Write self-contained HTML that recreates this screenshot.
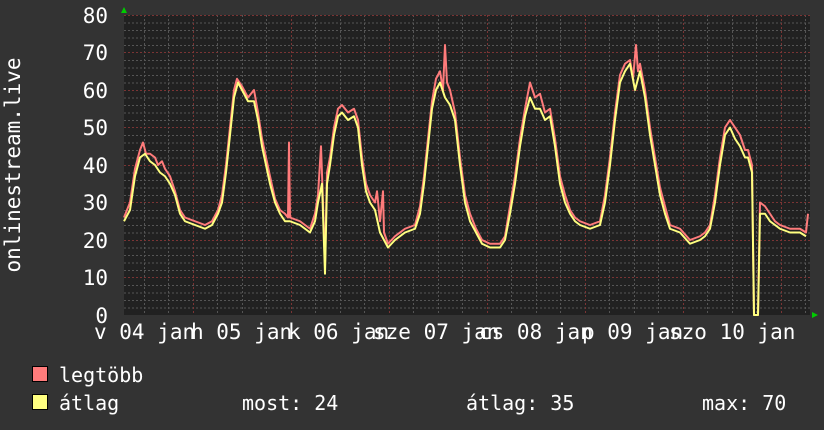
<!DOCTYPE html>
<html><head><meta charset="utf-8"><style>
html,body{margin:0;padding:0;background:#333;}
svg{display:block}
text{font-family:"DejaVu Sans Mono","Liberation Mono",monospace;fill:#fff}
</style></head><body>
<svg width="824" height="430" viewBox="0 0 824 430">
<rect x="0" y="0" width="824" height="430" fill="#333"/>
<rect x="124" y="15" width="686" height="300" fill="#212121"/>
<g stroke="#555" stroke-width="1" stroke-dasharray="2 2">
<path d="M124 22.5H810M124 30H810M124 37.5H810M124 45H810M124 60H810M124 67.5H810M124 75H810M124 82.5H810M124 97.5H810M124 105H810M124 112.5H810M124 120H810M124 135H810M124 142.5H810M124 150H810M124 157.5H810M124 172.5H810M124 180H810M124 187.5H810M124 195H810M124 210H810M124 217.5H810M124 225H810M124 232.5H810M124 247.5H810M124 255H810M124 262.5H810M124 270H810M124 285H810M124 292.5H810M124 300H810M124 307.5H810" transform="translate(0,0.5)"/>
<path d="M144.5 15V315M168.5 15V315M217.5 15V315M242.5 15V315M266.5 15V315M315.5 15V315M340.5 15V315M364.5 15V315M413.5 15V315M438.5 15V315M462.5 15V315M511.5 15V315M536.5 15V315M560.5 15V315M609.5 15V315M634.5 15V315M658.5 15V315M707.5 15V315M732.5 15V315M756.5 15V315M805.5 15V315"/>
</g>
<g stroke="#7a3434" stroke-width="1" stroke-dasharray="2 2">
<path d="M124 15.5H810M124 52.5H810M124 90.5H810M124 127.5H810M124 165.5H810M124 202.5H810M124 240.5H810M124 277.5H810"/>
<path d="M193.5 15V315M291.5 15V315M389.5 15V315M487.5 15V315M585.5 15V315M683.5 15V315M781.5 15V315"/>
</g>
<g transform="translate(0,315) scale(1,-3.75)" fill="none" stroke-width="2" stroke-linejoin="round">
<polyline vector-effect="non-scaling-stroke" stroke="#ff7b7b" points="124,26 130,30 135,39 140,44 143,46 146,43 150,43 155,42 158,40 162,41 165,39 170,37 175,33 180,28 185,26 195,25 205,24 212,25 218,28 222,32 226,40 230,50 234,60 237,63 242,61 248,58 254,60 258,54 262,47 266,42 270,37 275,31 280,28 285,27 288,26 289,46 290,26 300,25 305,24 310,23 315,27 318,32 321,45 323,30 325,13 327,38 330,42 334,50 338,55 342,56 348,54 354,55 358,52 362,42 366,35 370,32 375,30 377,33 380,25 383,33 384,22 388,19 395,21 405,23 415,24 420,29 424,37 428,47 432,57 436,63 440,65 443,60 445,72 447,62 450,60 455,54 460,42 465,32 470,27 476,23 482,20 490,19 500,19 505,21 510,29 515,37 520,47 525,55 530,62 535,58 540,59 545,54 550,55 555,47 560,37 565,32 570,28 575,26 580,25 590,24 600,25 605,32 610,42 615,54 620,64 625,67 630,68 633,63 636,72 638,65 640,67 645,60 650,50 655,42 660,34 665,29 670,24 680,23 690,20 700,21 705,22 710,24 715,32 720,42 725,50 730,52 735,50 740,48 745,44 748,44 752,40 754,0 758,0 760,30 765,29 770,27 775,25 780,24 790,23 800,23 806,22 808,27"/>
<polyline vector-effect="non-scaling-stroke" stroke="#ffff80" points="124,25 130,28 135,37 140,42 145,43 150,41 155,40 160,38 165,37 170,35 175,32 180,27 185,25 195,24 205,23 212,24 218,27 222,30 226,38 230,48 234,58 238,62 242,60 248,57 254,57 258,52 262,45 266,40 270,35 275,30 280,27 285,25 290,25 300,24 305,23 310,22 315,25 318,30 322,35 325,11 327,35 330,40 334,48 338,53 342,54 348,52 354,53 358,50 362,40 366,33 370,30 375,28 380,22 388,18 395,20 405,22 415,23 420,27 424,35 428,45 432,55 436,60 440,62 445,58 450,56 455,52 460,40 465,30 470,25 476,22 482,19 490,18 500,18 505,20 510,27 515,35 520,45 525,53 530,58 535,55 540,55 545,52 550,53 555,45 560,35 565,30 570,27 575,25 580,24 590,23 600,24 605,30 610,40 615,52 620,62 625,65 630,67 635,60 640,65 645,58 650,48 655,40 660,32 665,27 670,23 680,22 690,19 700,20 705,21 710,23 715,30 720,40 725,48 730,50 735,47 740,45 745,42 748,42 752,38 754,0 758,0 760,27 765,27 770,25 775,24 780,23 790,22 800,22 806,21"/>
</g>
<polygon points="121,13 127,13 124,7" fill="#0c0"/>
<polygon points="812,312 812,318 818,315" fill="#0c0"/>
<g font-size="21" text-anchor="end">
<text x="108" y="23">80</text><text x="108" y="60">70</text><text x="108" y="98">60</text><text x="108" y="135">50</text><text x="108" y="173">40</text><text x="108" y="210">30</text><text x="108" y="248">20</text><text x="108" y="285">10</text><text x="108" y="323">0</text>
</g>
<text font-size="21" transform="translate(20,165) rotate(-90)" text-anchor="middle">onlinestream.live</text>
<g font-size="21">
<text x="94" y="339">v 04 jan</text>
<text x="191" y="339">h 05 jan</text>
<text x="288" y="339">k 06 jan</text>
<text x="373" y="339">sze 07 jan</text>
<text x="479" y="339">cs 08 jan</text>
<text x="582" y="339">p 09 jan</text>
<text x="669" y="339">szo 10 jan</text>
</g>
<rect x="32.5" y="366.5" width="15" height="15" fill="#ff7b7b" stroke="#000"/>
<rect x="32.5" y="394.5" width="15" height="15" fill="#ffff80" stroke="#000"/>
<g font-size="20">
<text x="59" y="382">legtöbb</text>
<text x="59" y="410">átlag</text>
<text x="242" y="410">most: 24</text>
<text x="466" y="410">átlag: 35</text>
<text x="702" y="410">max: 70</text>
</g>
</svg>
</body></html>
